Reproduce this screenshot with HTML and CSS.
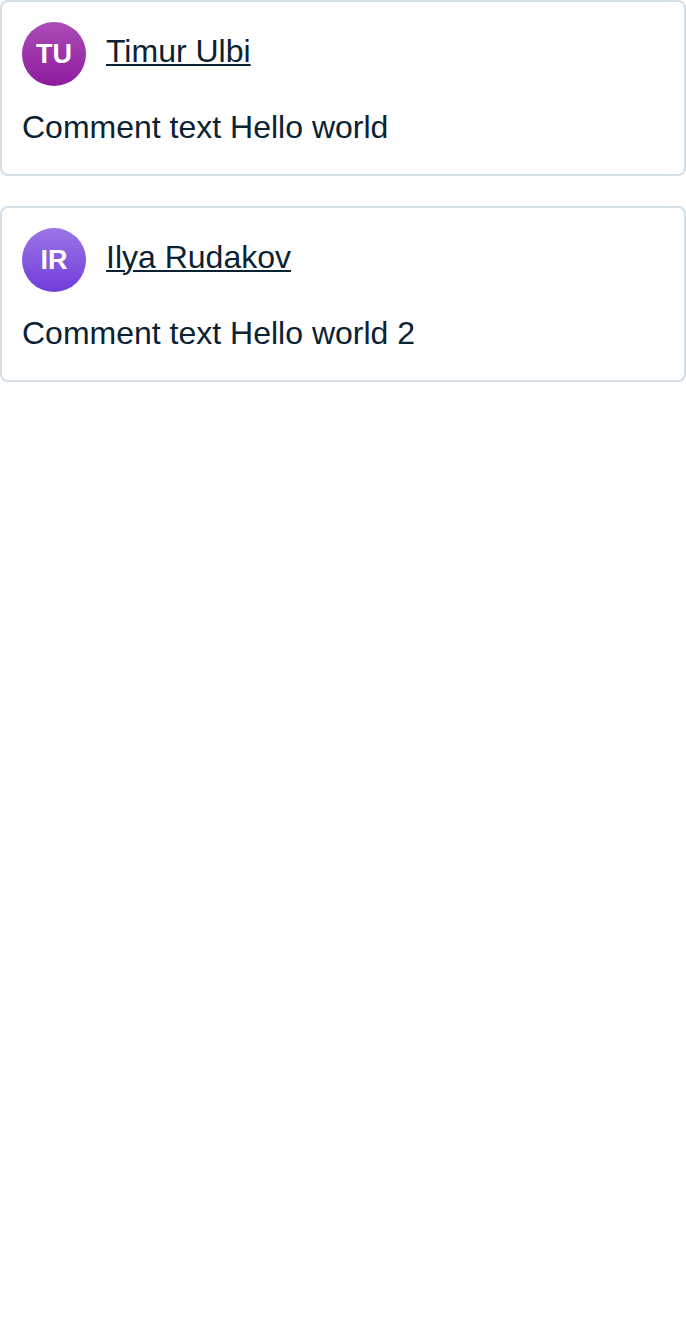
FILE: index.html
```html
<!DOCTYPE html>
<html>
<head>
<meta charset="utf-8">
<link rel="stylesheet" href="styles.css">
</head>
<body>
<div class="list">
  <div class="card">
    <div class="header">
      <div class="avatar avatar-tu">TU</div>
      <a class="name" href="#">Timur Ulbi</a>
    </div>
    <p class="text">Comment text Hello world</p>
  </div>
  <div class="card">
    <div class="header">
      <div class="avatar avatar-ir">IR</div>
      <a class="name" href="#">Ilya Rudakov</a>
    </div>
    <p class="text">Comment text Hello world 2</p>
  </div>
</div>
</body>
</html>
```
FILE: styles.css
```css
html, body {
  margin: 0;
  padding: 0;
  background: #ffffff;
}
body {
  font-family: "Liberation Sans", Arial, sans-serif;
  color: #0b2233;
}
.list {
  display: flex;
  flex-direction: column;
  gap: 30px;
}
.card {
  border: 2px solid #d3dee6;
  border-radius: 8px;
  padding: 20px 20px 23px;
}
.header {
  display: flex;
  align-items: center;
  gap: 20px;
}
.avatar {
  width: 64px;
  height: 64px;
  border-radius: 50%;
  display: flex;
  align-items: center;
  justify-content: center;
  color: #ffffff;
  font-weight: bold;
  font-size: 27px;
}
.avatar-tu {
  background: linear-gradient(180deg, #ab4db7 0%, #8d1b9d 100%);
}
.avatar-ir {
  background: linear-gradient(180deg, #9b75e7 0%, #713ddb 100%);
}
.name {
  font-size: 32px;
  color: #0b2233;
  text-decoration: underline;
  text-decoration-thickness: 2px;
  text-underline-offset: 2px;
  padding-bottom: 6px;
}
.text {
  margin: 17px 0 0;
  font-size: 32px;
  line-height: 48px;
}
```
